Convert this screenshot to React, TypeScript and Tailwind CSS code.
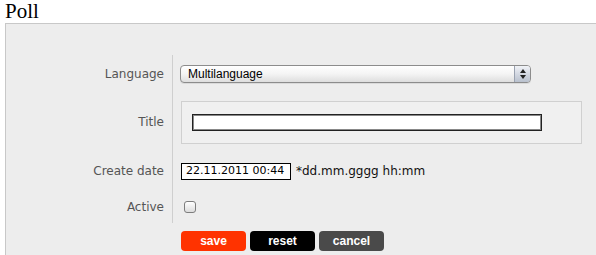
import React from 'react';

const labelCls = "w-[167px] shrink-0 self-stretch flex items-center justify-end pr-2 border-r border-[#cfcfcf] text-[12px] text-[#555] font-['DejaVu_Sans',sans-serif]";

function Row({ label, h, children }: { label: string; h: string; children: React.ReactNode }) {
  return (
    <div className={`flex ${h}`}>
      <div className={labelCls}>{label}</div>
      <div className="flex items-center">{children}</div>
    </div>
  );
}

export default function App() {
  return (
    <div className="w-[596px] h-[255px] overflow-hidden bg-white">
      <h1 className="pl-[5px] text-[21px] leading-[23px] text-black font-['Liberation_Serif',serif]">Poll</h1>
      <div className="ml-[5px] border-t border-l border-b border-[#c8c8c8] bg-[#ededed] pt-[31px] pb-[12px]">
        <Row label="Language" h="h-[37px]">
          {/* select, drawn in the aqua style */}
          <div className="ml-[7px] flex h-[18px] w-[351px] rounded-[4px] border border-[#8c8c8c] bg-gradient-to-b from-white via-[#f4f4f4] to-[#dedede] overflow-hidden shadow-[0_1px_0_rgba(0,0,0,0.08)]">
            <div className="flex-1 pl-[7px] flex items-center text-[12px] text-black font-['Liberation_Sans',sans-serif]">Multilanguage</div>
            <div className="w-[16px] border-l border-[#9aa2b0] bg-gradient-to-b from-[#f1f3f7] via-[#d3d8e2] to-[#b9c1ce] flex flex-col items-center justify-center gap-[2px]">
              <svg width="6" height="4" viewBox="0 0 6 4"><path d="M3 0L6 4H0z" fill="#222" /></svg>
              <svg width="6" height="4" viewBox="0 0 6 4"><path d="M0 0h6L3 4z" fill="#222" /></svg>
            </div>
          </div>
        </Row>
        <Row label="Title" h="h-[60px]">
          <div className="ml-[8px] w-[401px] h-[43px] border border-[#d0d0d0] bg-[#f0f0f0] pl-[10px] pt-[12px]">
            <div className="w-[350px] h-[17px] border border-[#222] shadow-[inset_0_0_0_1px_#888] bg-white" />
          </div>
        </Row>
        <Row label="Create date" h="h-[38px]">
          <div className="ml-[8px] w-[110px] h-[17px] border border-black bg-white pl-[4px] flex items-center text-[11px] text-black font-['DejaVu_Sans',sans-serif]">22.11.2011 00:44</div>
          <span className="ml-[5px] text-[12px] text-[#111] font-['DejaVu_Sans',sans-serif]">*dd.mm.gggg hh:mm</span>
        </Row>
        <Row label="Active" h="h-[33px]">
          <div className="ml-[11px] w-[12px] h-[12px] rounded-[3px] border border-[#7d7d7d] bg-gradient-to-b from-white to-[#dcdcdc]" />
        </Row>
        <div className="mt-[8px] pl-[175px] flex gap-[4px] font-['Liberation_Sans',sans-serif] text-[12px] font-bold text-white">
          <button className="w-[65px] h-[20px] rounded-[4px] bg-[#ff3300]">save</button>
          <button className="w-[65px] h-[20px] rounded-[4px] bg-black">reset</button>
          <button className="w-[65px] h-[20px] rounded-[4px] bg-[#4a4a4a]">cancel</button>
        </div>
      </div>
    </div>
  );
}
